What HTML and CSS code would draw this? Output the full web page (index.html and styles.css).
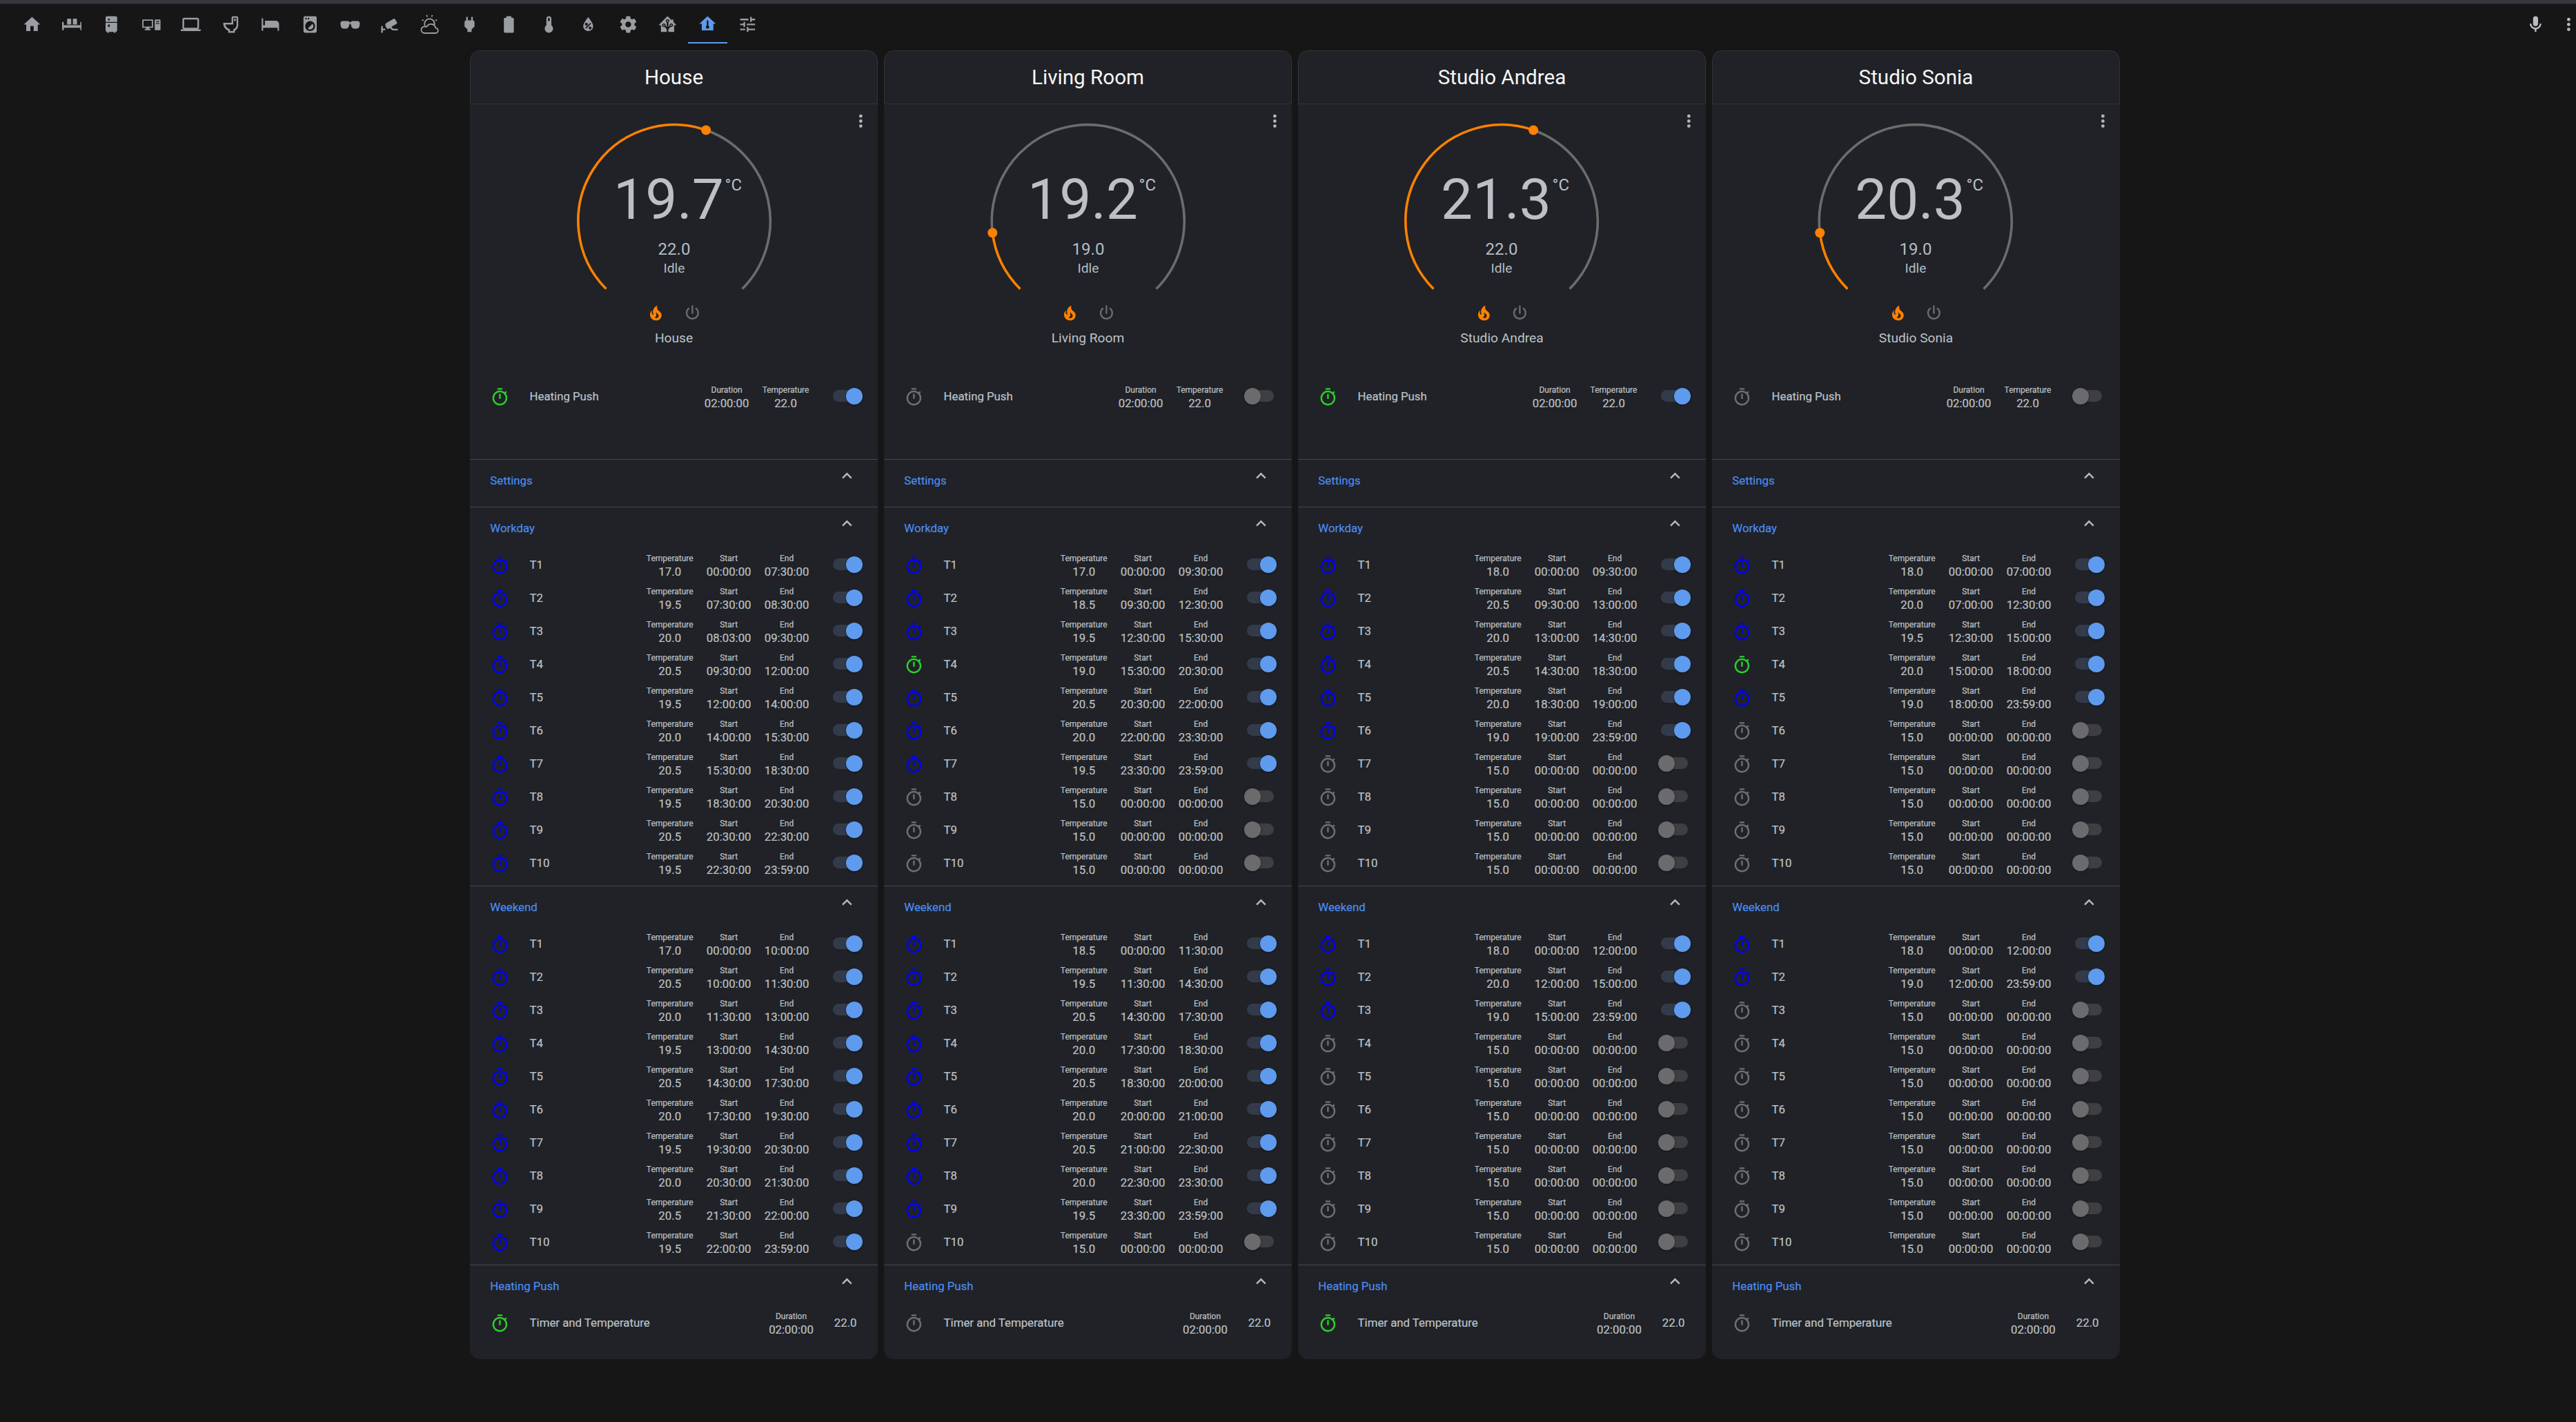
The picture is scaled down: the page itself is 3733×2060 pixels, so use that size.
FILE: index.html
```html
<!DOCTYPE html>
<html lang="en">
<head>
<meta charset="utf-8">
<title>Thermostats</title>
<link rel="stylesheet" href="styles.css">
</head>
<body>
<svg class="defs" aria-hidden="true">
<symbol id="t" viewBox="0 0 24 24"><path d="M12,20A7,7 0 0,1 5,13A7,7 0 0,1 12,6A7,7 0 0,1 19,13A7,7 0 0,1 12,20M19.03,7.39L20.45,5.97C20,5.46 19.55,5 19.04,4.56L17.62,6C16.07,4.74 14.12,4 12,4A9,9 0 0,0 3,13A9,9 0 0,0 12,22C17,22 21,17.97 21,13C21,10.88 20.26,8.93 19.03,7.39M11,14H13V8H11M15,1H9V3H15V1Z"/></symbol>
<symbol id="up" viewBox="0 0 24 24"><path d="M7.41,15.41L12,10.83L16.59,15.41L18,14L12,8L6,14L7.41,15.41Z"/></symbol>
<symbol id="dots" viewBox="0 0 24 24"><path d="M12,16A2,2 0 0,1 14,18A2,2 0 0,1 12,20A2,2 0 0,1 10,18A2,2 0 0,1 12,16M12,10A2,2 0 0,1 14,12A2,2 0 0,1 12,14A2,2 0 0,1 10,12A2,2 0 0,1 12,10M12,4A2,2 0 0,1 14,6A2,2 0 0,1 12,8A2,2 0 0,1 10,6A2,2 0 0,1 12,4Z"/></symbol>
<symbol id="fire" viewBox="0 0 24 24"><path d="M17.66 11.2C17.43 10.9 17.15 10.64 16.89 10.38C16.22 9.78 15.46 9.35 14.82 8.72C13.33 7.26 13 4.85 13.95 3C13 3.23 12.17 3.75 11.46 4.32C8.87 6.4 7.85 10.07 9.07 13.22C9.11 13.32 9.15 13.42 9.15 13.55C9.15 13.77 9 13.97 8.8 14.05C8.57 14.15 8.33 14.09 8.14 13.93C8.08 13.88 8.04 13.83 8 13.76C6.87 12.33 6.69 10.28 7.45 8.64C5.78 10 4.87 12.3 5 14.47C5.06 14.97 5.12 15.47 5.29 15.97C5.43 16.57 5.7 17.17 6 17.7C7.08 19.43 8.95 20.67 10.96 20.92C13.1 21.19 15.39 20.8 17.03 19.32C18.86 17.66 19.5 15 18.56 12.72L18.43 12.46C18.22 12 17.66 11.2 17.66 11.2M14.5 17.5C14.22 17.74 13.76 18 13.4 18.1C12.28 18.5 11.16 17.94 10.5 17.28C11.69 17 12.4 16.12 12.61 15.23C12.78 14.43 12.46 13.77 12.33 13C12.21 12.26 12.23 11.63 12.5 10.94C12.69 11.32 12.89 11.7 13.13 12C13.9 13 15.11 13.44 15.37 14.8C15.41 14.94 15.43 15.08 15.43 15.23C15.46 16.05 15.1 16.95 14.5 17.5H14.5Z"/></symbol>
<symbol id="pw" viewBox="0 0 24 24"><path d="M16.56,5.44L15.11,6.89C16.84,7.94 18,9.83 18,12A6,6 0 0,1 12,18A6,6 0 0,1 6,12C6,9.83 7.16,7.94 8.88,6.88L7.44,5.44C5.36,6.88 4,9.28 4,12A8,8 0 0,0 12,20A8,8 0 0,0 20,12C20,9.28 18.64,6.88 16.56,5.44M13,3H11V13H13"/></symbol>
</svg>
<header class="bar">
<nav class="tabs">
<a class="tab"><svg viewBox="0 0 24 24"><path d="M10,20V14H14V20H19V12H22L12,3L2,12H5V20H10Z"/></svg></a>
<a class="tab"><svg viewBox="0 0 24 24"><path d="M7 5h3a1 1 0 0 1 1 1v6H6V6a1 1 0 0 1 1-1zM14 5h3a1 1 0 0 1 1 1v6h-5V6a1 1 0 0 1 1-1zM0 9h2v4h20V9h2v10h-2v-3H2v3H0z"/></svg></a>
<a class="tab"><svg viewBox="0 0 24 24"><path d="M7,2H17A2,2 0 0,1 19,4V9H5V4A2,2 0 0,1 7,2M19,19A2,2 0 0,1 17,21V22H15V21H9V22H7V21A2,2 0 0,1 5,19V10H19V19M8,5V7H10V5H8M8,12V15H10V12H8Z"/></svg></a>
<a class="tab"><svg viewBox="0 0 24 24"><path fill-rule="evenodd" d="M1 6h13v10H9.5v1.5H11V19H4v-1.500h1.500V16H1zM2.500 7.500v7h10v-7zM17 6h5a1 1 0 0 1 1 1v11a1 1 0 0 1-1 1h-5a1 1 0 0 1-1-1V7a1 1 0 0 1 1-1zM17.500 8v1h4V8zM17.500 10.500v1h4v-1z"/></svg></a>
<a class="tab"><svg viewBox="0 0 24 24"><path d="M4,6H20V16H4M20,18A2,2 0 0,0 22,16V6C22,4.89 21.1,4 20,4H4C2.89,4 2,4.89 2,6V16A2,2 0 0,0 4,18H0V20H24V18H20Z"/></svg></a>
<a class="tab"><svg viewBox="0 0 24 24"><path fill-rule="evenodd" d="M15 2h4a2 2 0 0 1 2 2v9c0 3-1.600 5.200-4 6.500V22H9v-2.500C5.500 18 3 15 3 11V10h10V4a2 2 0 0 1 2-2zM15 4v8H5.300C5.900 14.600 8 16.600 11 18v2h4v-2c2.500-1 4-2.800 4-5V4zM16 5h2v3h-2z"/></svg></a>
<a class="tab"><svg viewBox="0 0 24 24"><path d="M1 4.500h1.800V13H5V7.500h13a4 4 0 0 1 4 4v8h-1.800V16H2.800v3.500H1z"/></svg></a>
<a class="tab"><svg viewBox="0 0 24 24"><path d="M14.83,11.17C16.39,12.73 16.39,15.27 14.83,16.83C13.27,18.39 10.73,18.39 9.17,16.83L14.83,11.17M6,2H18A2,2 0 0,1 20,4V20A2,2 0 0,1 18,22H6A2,2 0 0,1 4,20V4A2,2 0 0,1 6,2M7,4A1,1 0 0,0 6,5A1,1 0 0,0 7,6A1,1 0 0,0 8,5A1,1 0 0,0 7,4M10,4A1,1 0 0,0 9,5A1,1 0 0,0 10,6A1,1 0 0,0 11,5A1,1 0 0,0 10,4M12,8A6,6 0 0,0 6,14A6,6 0 0,0 12,20A6,6 0 0,0 18,14A6,6 0 0,0 12,8Z"/></svg></a>
<a class="tab"><svg viewBox="0 0 24 24"><path d="M7,17H4C2.38,17 0.96,15.74 0.76,14.14L0.26,11.15C0.15,10.3 0.39,9.5 0.91,8.92C1.43,8.34 2.19,8 3,8H9C9.83,8 10.58,8.35 11.06,8.96C11.17,9.11 11.27,9.27 11.35,9.45C11.78,9.36 12.22,9.36 12.64,9.45C12.72,9.27 12.82,9.11 12.94,8.96C13.41,8.35 14.16,8 15,8H21C21.81,8 22.57,8.34 23.09,8.92C23.6,9.5 23.84,10.3 23.74,11.11L23.23,14.18C23.04,15.74 21.61,17 20,17H17C15.44,17 13.92,15.81 13.54,14.3L12.64,11.3C12.26,11.12 11.73,11.12 11.35,11.3L10.43,14.3C10.07,15.81 8.56,17 7,17Z"/></svg></a>
<a class="tab"><svg viewBox="0 0 24 24"><path d="M18.15,4.94C17.77,4.91 17.37,5 17,5.2L8.35,10.2C7,10.97 6.54,12.69 7.32,14.04L8.82,16.64C9.25,17.38 10.2,17.64 10.94,17.21L12.23,16.46C12.5,16.32 12.84,16.4 13,16.67C13.92,18.26 15.62,19.25 17.45,19.25H22V17.25H17.45C16.34,17.25 15.32,16.66 14.76,15.7C14.5,15.27 14.72,14.71 15.15,14.46L20.43,11.41C21.11,11.02 21.34,10.15 20.95,9.47L19,6.1C18.79,5.73 18.5,5.03 18.15,4.94M2,14V22H4V19H7V17H4V14H2Z"/></svg></a>
<a class="tab"><svg viewBox="0 0 24 24" class="line"><path d="M6 22.500h13a3.200 3.200 0 0 0 .3-6.400a5.500 5.500 0 0 0-10.300-1.500H6a3.950 3.950 0 0 0 0 7.900zM6.500 13.500A6 6 0 1 1 17.800 13M8.500 .8l1 2M15.500 .8l-1 2M3 6.500l2 .8M21 6.500l-2 .8"/></svg></a>
<a class="tab"><svg viewBox="0 0 24 24"><path d="M16 7V3H14V7H10V3H8V7C7 7 6 8 6 9V14.500L9.500 18V21H14.500V18L18 14.500V9C18 8 17 7 16 7Z"/></svg></a>
<a class="tab"><svg viewBox="0 0 24 24"><path d="M16.67,4H15V2H9V4H7.33A1.33,1.33 0 0,0 6,5.33V20.67C6,21.4 6.6,22 7.33,22H16.67A1.33,1.33 0 0,0 18,20.67V5.33C18,4.6 17.4,4 16.67,4Z"/></svg></a>
<a class="tab"><svg viewBox="0 0 24 24"><path d="M15 13V5A3 3 0 0 0 9 5V13A5 5 0 1 0 15 13M12 4A1 1 0 0 1 13 5V8H11V5A1 1 0 0 1 12 4Z"/></svg></a>
<a class="tab"><svg viewBox="0 0 24 24"><path d="M12,3.25C12,3.25 6,10 6,14C6,17.32 8.69,20 12,20A6,6 0 0,0 18,14C18,10 12,3.25 12,3.25M14.47,9.97L15.53,11.03L9.53,17.03L8.47,15.97M9.75,10A1.75,1.75 0 0,1 11.5,11.75A1.75,1.75 0 0,1 9.75,13.5A1.75,1.75 0 0,1 8,11.75A1.75,1.75 0 0,1 9.75,10M14.25,14.5A1.75,1.75 0 0,1 16,16.25A1.75,1.75 0 0,1 14.25,18A1.75,1.75 0 0,1 12.5,16.25A1.75,1.75 0 0,1 14.25,14.5Z"/></svg></a>
<a class="tab"><svg viewBox="0 0 24 24"><path d="M12,15.5A3.5,3.5 0 0,1 8.5,12A3.5,3.5 0 0,1 12,8.5A3.5,3.5 0 0,1 15.5,12A3.5,3.5 0 0,1 12,15.5M19.43,12.97C19.47,12.65 19.5,12.33 19.5,12C19.5,11.67 19.47,11.34 19.43,11L21.54,9.37C21.73,9.22 21.78,8.95 21.66,8.73L19.66,5.27C19.54,5.05 19.27,4.96 19.05,5.05L16.56,6.05C16.04,5.66 15.5,5.32 14.87,5.07L14.5,2.42C14.46,2.18 14.25,2 14,2H10C9.75,2 9.54,2.18 9.5,2.42L9.13,5.07C8.5,5.32 7.96,5.66 7.44,6.05L4.95,5.05C4.73,4.96 4.46,5.05 4.34,5.27L2.34,8.73C2.21,8.95 2.27,9.22 2.46,9.37L4.57,11C4.53,11.34 4.5,11.67 4.5,12C4.5,12.33 4.53,12.65 4.57,12.97L2.46,14.63C2.27,14.78 2.21,15.05 2.34,15.27L4.34,18.73C4.46,18.95 4.73,19.03 4.95,18.95L7.44,17.94C7.96,18.34 8.5,18.68 9.13,18.93L9.5,21.58C9.54,21.82 9.75,22 10,22H14C14.25,22 14.46,21.82 14.5,21.58L14.87,18.93C15.5,18.67 16.04,18.34 16.56,17.94L19.05,18.95C19.27,19.03 19.54,18.95 19.66,18.73L21.66,15.27C21.78,15.05 21.73,14.78 21.54,14.63L19.43,12.97Z"/></svg></a>
<a class="tab"><svg viewBox="0 0 24 24"><path d="M21.8,13H20V21H13V17.67L15.79,14.88L16.5,15C17.66,15 18.6,14.06 18.6,12.9C18.6,11.74 17.66,10.8 16.5,10.8A2.1,2.1 0 0,0 14.4,12.9L14.5,13.61L13,15.13V9.65C13.66,9.29 14.1,8.6 14.1,7.8A2.1,2.1 0 0,0 12,5.7A2.1,2.1 0 0,0 9.9,7.8C9.9,8.6 10.34,9.29 11,9.65V15.13L9.5,13.61L9.6,12.9A2.1,2.1 0 0,0 7.5,10.8A2.1,2.1 0 0,0 5.4,12.9A2.1,2.1 0 0,0 7.5,15L8.21,14.88L11,17.67V21H4V13H2.25C1.83,13 1.42,13 1.42,12.79C1.43,12.57 1.85,12.15 2.28,11.72L11,3C11.33,2.67 11.67,2.33 12,2.33C12.33,2.33 12.67,2.67 13,3L17,7V6H19V9L21.78,11.78C22.15,12.15 22.54,12.54 22.56,12.76C22.57,13 22.18,13 21.8,13M7.5,12A0.9,0.9 0 0,1 8.4,12.9A0.9,0.9 0 0,1 7.5,13.8A0.9,0.9 0 0,1 6.6,12.9A0.9,0.9 0 0,1 7.5,12M16.5,12C17,12 17.4,12.4 17.4,12.9C17.4,13.4 17,13.8 16.5,13.8A0.9,0.9 0 0,1 15.6,12.9A0.9,0.9 0 0,1 16.5,12M12,6.9C12.5,6.9 12.9,7.3 12.9,7.8C12.9,8.3 12.5,8.7 12,8.7C11.5,8.7 11.1,8.3 11.1,7.8C11.1,7.3 11.5,6.9 12,6.9Z"/></svg></a>
<a class="tab active"><svg viewBox="0 0 24 24"><path fill-rule="evenodd" d="M12 3L2 12H5V20H19V12H22L12 3M13 14.300C13.600 14.600 14 15.300 14 16C14 17.100 13.100 18 12 18S10 17.100 10 16C10 15.300 10.400 14.600 11 14.300V9C11 8.400 11.400 8 12 8S13 8.400 13 9V14.300Z"/></svg></a>
<a class="tab"><svg viewBox="0 0 24 24"><path d="M3,17V19H9V17H3M3,5V7H13V5H3M13,21V19H21V17H13V15H11V21H13M7,9V11H3V13H7V15H9V9H7M21,13V11H11V13H21M15,9H17V7H21V5H17V3H15V9Z"/></svg></a>
</nav>
<div class="actions">
<svg viewBox="0 0 24 24"><path d="M12,2A3,3 0 0,1 15,5V11A3,3 0 0,1 12,14A3,3 0 0,1 9,11V5A3,3 0 0,1 12,2M19,11C19,14.53 16.39,17.44 13,17.93V21H11V17.93C7.61,17.44 5,14.53 5,11H7A5,5 0 0,0 12,16A5,5 0 0,0 17,11H19Z"/></svg>
<svg><use href="#dots"/></svg>
</div>
</header>
<main class="board">

<section class="card">
<h2 class="title">House</h2>
<div class="climate">
<svg class="menu"><use href="#dots"/></svg>
<svg class="dial" viewBox="0 0 290 260"><path class="trk" d="M191.100 18.500A139.500 139.500 0 0 1 243.600 248.600"/><path class="hot" d="M46.400 248.600A139.500 139.500 0 0 1 191.100 18.500"/><circle class="pt" cx="191.100" cy="18.500" r="7"/><text class="cur" x="137" y="147.400">19.7</text><text class="unit" x="218.500" y="105.500">°C</text><text class="set" x="145" y="198.500">22.0</text><text class="st" x="145" y="224.500">Idle</text></svg>
<div class="modes"><svg class="hotc"><use href="#fire"/></svg><svg class="offc"><use href="#pw"/></svg></div>
<div class="lbl">House</div>
<div class="row"><svg class="ic g"><use href="#t"/></svg><span class="nm">Heating Push</span><div class="a"><small>Duration</small>02:00:00</div><div class="a"><small>Temperature</small>22.0</div><i class="tg on"></i></div>
</div>
<div class="sec"><div class="hd"><span>Settings</span><svg><use href="#up"/></svg></div></div>
<div class="sec"><div class="hd"><span>Workday</span><svg><use href="#up"/></svg></div>
<div class="row"><svg class="ic b"><use href="#t"/></svg><span class="nm">T1</span><div class="a"><small>Temperature</small>17.0</div><div class="a"><small>Start</small>00:00:00</div><div class="a"><small>End</small>07:30:00</div><i class="tg on"></i></div>
<div class="row"><svg class="ic b"><use href="#t"/></svg><span class="nm">T2</span><div class="a"><small>Temperature</small>19.5</div><div class="a"><small>Start</small>07:30:00</div><div class="a"><small>End</small>08:30:00</div><i class="tg on"></i></div>
<div class="row"><svg class="ic b"><use href="#t"/></svg><span class="nm">T3</span><div class="a"><small>Temperature</small>20.0</div><div class="a"><small>Start</small>08:03:00</div><div class="a"><small>End</small>09:30:00</div><i class="tg on"></i></div>
<div class="row"><svg class="ic b"><use href="#t"/></svg><span class="nm">T4</span><div class="a"><small>Temperature</small>20.5</div><div class="a"><small>Start</small>09:30:00</div><div class="a"><small>End</small>12:00:00</div><i class="tg on"></i></div>
<div class="row"><svg class="ic b"><use href="#t"/></svg><span class="nm">T5</span><div class="a"><small>Temperature</small>19.5</div><div class="a"><small>Start</small>12:00:00</div><div class="a"><small>End</small>14:00:00</div><i class="tg on"></i></div>
<div class="row"><svg class="ic b"><use href="#t"/></svg><span class="nm">T6</span><div class="a"><small>Temperature</small>20.0</div><div class="a"><small>Start</small>14:00:00</div><div class="a"><small>End</small>15:30:00</div><i class="tg on"></i></div>
<div class="row"><svg class="ic b"><use href="#t"/></svg><span class="nm">T7</span><div class="a"><small>Temperature</small>20.5</div><div class="a"><small>Start</small>15:30:00</div><div class="a"><small>End</small>18:30:00</div><i class="tg on"></i></div>
<div class="row"><svg class="ic b"><use href="#t"/></svg><span class="nm">T8</span><div class="a"><small>Temperature</small>19.5</div><div class="a"><small>Start</small>18:30:00</div><div class="a"><small>End</small>20:30:00</div><i class="tg on"></i></div>
<div class="row"><svg class="ic b"><use href="#t"/></svg><span class="nm">T9</span><div class="a"><small>Temperature</small>20.5</div><div class="a"><small>Start</small>20:30:00</div><div class="a"><small>End</small>22:30:00</div><i class="tg on"></i></div>
<div class="row"><svg class="ic b"><use href="#t"/></svg><span class="nm">T10</span><div class="a"><small>Temperature</small>19.5</div><div class="a"><small>Start</small>22:30:00</div><div class="a"><small>End</small>23:59:00</div><i class="tg on"></i></div>
</div>
<div class="sec"><div class="hd"><span>Weekend</span><svg><use href="#up"/></svg></div>
<div class="row"><svg class="ic b"><use href="#t"/></svg><span class="nm">T1</span><div class="a"><small>Temperature</small>17.0</div><div class="a"><small>Start</small>00:00:00</div><div class="a"><small>End</small>10:00:00</div><i class="tg on"></i></div>
<div class="row"><svg class="ic b"><use href="#t"/></svg><span class="nm">T2</span><div class="a"><small>Temperature</small>20.5</div><div class="a"><small>Start</small>10:00:00</div><div class="a"><small>End</small>11:30:00</div><i class="tg on"></i></div>
<div class="row"><svg class="ic b"><use href="#t"/></svg><span class="nm">T3</span><div class="a"><small>Temperature</small>20.0</div><div class="a"><small>Start</small>11:30:00</div><div class="a"><small>End</small>13:00:00</div><i class="tg on"></i></div>
<div class="row"><svg class="ic b"><use href="#t"/></svg><span class="nm">T4</span><div class="a"><small>Temperature</small>19.5</div><div class="a"><small>Start</small>13:00:00</div><div class="a"><small>End</small>14:30:00</div><i class="tg on"></i></div>
<div class="row"><svg class="ic b"><use href="#t"/></svg><span class="nm">T5</span><div class="a"><small>Temperature</small>20.5</div><div class="a"><small>Start</small>14:30:00</div><div class="a"><small>End</small>17:30:00</div><i class="tg on"></i></div>
<div class="row"><svg class="ic b"><use href="#t"/></svg><span class="nm">T6</span><div class="a"><small>Temperature</small>20.0</div><div class="a"><small>Start</small>17:30:00</div><div class="a"><small>End</small>19:30:00</div><i class="tg on"></i></div>
<div class="row"><svg class="ic b"><use href="#t"/></svg><span class="nm">T7</span><div class="a"><small>Temperature</small>19.5</div><div class="a"><small>Start</small>19:30:00</div><div class="a"><small>End</small>20:30:00</div><i class="tg on"></i></div>
<div class="row"><svg class="ic b"><use href="#t"/></svg><span class="nm">T8</span><div class="a"><small>Temperature</small>20.0</div><div class="a"><small>Start</small>20:30:00</div><div class="a"><small>End</small>21:30:00</div><i class="tg on"></i></div>
<div class="row"><svg class="ic b"><use href="#t"/></svg><span class="nm">T9</span><div class="a"><small>Temperature</small>20.5</div><div class="a"><small>Start</small>21:30:00</div><div class="a"><small>End</small>22:00:00</div><i class="tg on"></i></div>
<div class="row"><svg class="ic b"><use href="#t"/></svg><span class="nm">T10</span><div class="a"><small>Temperature</small>19.5</div><div class="a"><small>Start</small>22:00:00</div><div class="a"><small>End</small>23:59:00</div><i class="tg on"></i></div>
</div>
<div class="sec last"><div class="hd"><span>Heating Push</span><svg><use href="#up"/></svg></div>
<div class="row end"><svg class="ic g"><use href="#t"/></svg><span class="nm">Timer and Temperature</span><div class="a"><small>Duration</small>02:00:00</div><span class="v">22.0</span></div>
</div>
</section>

<section class="card">
<h2 class="title">Living Room</h2>
<div class="climate">
<svg class="menu"><use href="#dots"/></svg>
<svg class="dial" viewBox="0 0 290 260"><path class="trk" d="M6.300 167.300A139.500 139.500 0 1 1 243.600 248.600"/><path class="hot" d="M46.400 248.600A139.500 139.500 0 0 1 6.300 167.300"/><circle class="pt" cx="6.300" cy="167.300" r="7"/><text class="cur" x="137" y="147.400">19.2</text><text class="unit" x="218.500" y="105.500">°C</text><text class="set" x="145" y="198.500">19.0</text><text class="st" x="145" y="224.500">Idle</text></svg>
<div class="modes"><svg class="hotc"><use href="#fire"/></svg><svg class="offc"><use href="#pw"/></svg></div>
<div class="lbl">Living Room</div>
<div class="row"><svg class="ic o"><use href="#t"/></svg><span class="nm">Heating Push</span><div class="a"><small>Duration</small>02:00:00</div><div class="a"><small>Temperature</small>22.0</div><i class="tg"></i></div>
</div>
<div class="sec"><div class="hd"><span>Settings</span><svg><use href="#up"/></svg></div></div>
<div class="sec"><div class="hd"><span>Workday</span><svg><use href="#up"/></svg></div>
<div class="row"><svg class="ic b"><use href="#t"/></svg><span class="nm">T1</span><div class="a"><small>Temperature</small>17.0</div><div class="a"><small>Start</small>00:00:00</div><div class="a"><small>End</small>09:30:00</div><i class="tg on"></i></div>
<div class="row"><svg class="ic b"><use href="#t"/></svg><span class="nm">T2</span><div class="a"><small>Temperature</small>18.5</div><div class="a"><small>Start</small>09:30:00</div><div class="a"><small>End</small>12:30:00</div><i class="tg on"></i></div>
<div class="row"><svg class="ic b"><use href="#t"/></svg><span class="nm">T3</span><div class="a"><small>Temperature</small>19.5</div><div class="a"><small>Start</small>12:30:00</div><div class="a"><small>End</small>15:30:00</div><i class="tg on"></i></div>
<div class="row"><svg class="ic g"><use href="#t"/></svg><span class="nm">T4</span><div class="a"><small>Temperature</small>19.0</div><div class="a"><small>Start</small>15:30:00</div><div class="a"><small>End</small>20:30:00</div><i class="tg on"></i></div>
<div class="row"><svg class="ic b"><use href="#t"/></svg><span class="nm">T5</span><div class="a"><small>Temperature</small>20.5</div><div class="a"><small>Start</small>20:30:00</div><div class="a"><small>End</small>22:00:00</div><i class="tg on"></i></div>
<div class="row"><svg class="ic b"><use href="#t"/></svg><span class="nm">T6</span><div class="a"><small>Temperature</small>20.0</div><div class="a"><small>Start</small>22:00:00</div><div class="a"><small>End</small>23:30:00</div><i class="tg on"></i></div>
<div class="row"><svg class="ic b"><use href="#t"/></svg><span class="nm">T7</span><div class="a"><small>Temperature</small>19.5</div><div class="a"><small>Start</small>23:30:00</div><div class="a"><small>End</small>23:59:00</div><i class="tg on"></i></div>
<div class="row"><svg class="ic o"><use href="#t"/></svg><span class="nm">T8</span><div class="a"><small>Temperature</small>15.0</div><div class="a"><small>Start</small>00:00:00</div><div class="a"><small>End</small>00:00:00</div><i class="tg"></i></div>
<div class="row"><svg class="ic o"><use href="#t"/></svg><span class="nm">T9</span><div class="a"><small>Temperature</small>15.0</div><div class="a"><small>Start</small>00:00:00</div><div class="a"><small>End</small>00:00:00</div><i class="tg"></i></div>
<div class="row"><svg class="ic o"><use href="#t"/></svg><span class="nm">T10</span><div class="a"><small>Temperature</small>15.0</div><div class="a"><small>Start</small>00:00:00</div><div class="a"><small>End</small>00:00:00</div><i class="tg"></i></div>
</div>
<div class="sec"><div class="hd"><span>Weekend</span><svg><use href="#up"/></svg></div>
<div class="row"><svg class="ic b"><use href="#t"/></svg><span class="nm">T1</span><div class="a"><small>Temperature</small>18.5</div><div class="a"><small>Start</small>00:00:00</div><div class="a"><small>End</small>11:30:00</div><i class="tg on"></i></div>
<div class="row"><svg class="ic b"><use href="#t"/></svg><span class="nm">T2</span><div class="a"><small>Temperature</small>19.5</div><div class="a"><small>Start</small>11:30:00</div><div class="a"><small>End</small>14:30:00</div><i class="tg on"></i></div>
<div class="row"><svg class="ic b"><use href="#t"/></svg><span class="nm">T3</span><div class="a"><small>Temperature</small>20.5</div><div class="a"><small>Start</small>14:30:00</div><div class="a"><small>End</small>17:30:00</div><i class="tg on"></i></div>
<div class="row"><svg class="ic b"><use href="#t"/></svg><span class="nm">T4</span><div class="a"><small>Temperature</small>20.0</div><div class="a"><small>Start</small>17:30:00</div><div class="a"><small>End</small>18:30:00</div><i class="tg on"></i></div>
<div class="row"><svg class="ic b"><use href="#t"/></svg><span class="nm">T5</span><div class="a"><small>Temperature</small>20.5</div><div class="a"><small>Start</small>18:30:00</div><div class="a"><small>End</small>20:00:00</div><i class="tg on"></i></div>
<div class="row"><svg class="ic b"><use href="#t"/></svg><span class="nm">T6</span><div class="a"><small>Temperature</small>20.0</div><div class="a"><small>Start</small>20:00:00</div><div class="a"><small>End</small>21:00:00</div><i class="tg on"></i></div>
<div class="row"><svg class="ic b"><use href="#t"/></svg><span class="nm">T7</span><div class="a"><small>Temperature</small>20.5</div><div class="a"><small>Start</small>21:00:00</div><div class="a"><small>End</small>22:30:00</div><i class="tg on"></i></div>
<div class="row"><svg class="ic b"><use href="#t"/></svg><span class="nm">T8</span><div class="a"><small>Temperature</small>20.0</div><div class="a"><small>Start</small>22:30:00</div><div class="a"><small>End</small>23:30:00</div><i class="tg on"></i></div>
<div class="row"><svg class="ic b"><use href="#t"/></svg><span class="nm">T9</span><div class="a"><small>Temperature</small>19.5</div><div class="a"><small>Start</small>23:30:00</div><div class="a"><small>End</small>23:59:00</div><i class="tg on"></i></div>
<div class="row"><svg class="ic o"><use href="#t"/></svg><span class="nm">T10</span><div class="a"><small>Temperature</small>15.0</div><div class="a"><small>Start</small>00:00:00</div><div class="a"><small>End</small>00:00:00</div><i class="tg"></i></div>
</div>
<div class="sec last"><div class="hd"><span>Heating Push</span><svg><use href="#up"/></svg></div>
<div class="row end"><svg class="ic o"><use href="#t"/></svg><span class="nm">Timer and Temperature</span><div class="a"><small>Duration</small>02:00:00</div><span class="v">22.0</span></div>
</div>
</section>

<section class="card">
<h2 class="title">Studio Andrea</h2>
<div class="climate">
<svg class="menu"><use href="#dots"/></svg>
<svg class="dial" viewBox="0 0 290 260"><path class="trk" d="M191.100 18.500A139.500 139.500 0 0 1 243.600 248.600"/><path class="hot" d="M46.400 248.600A139.500 139.500 0 0 1 191.100 18.500"/><circle class="pt" cx="191.100" cy="18.500" r="7"/><text class="cur" x="137" y="147.400">21.3</text><text class="unit" x="218.500" y="105.500">°C</text><text class="set" x="145" y="198.500">22.0</text><text class="st" x="145" y="224.500">Idle</text></svg>
<div class="modes"><svg class="hotc"><use href="#fire"/></svg><svg class="offc"><use href="#pw"/></svg></div>
<div class="lbl">Studio Andrea</div>
<div class="row"><svg class="ic g"><use href="#t"/></svg><span class="nm">Heating Push</span><div class="a"><small>Duration</small>02:00:00</div><div class="a"><small>Temperature</small>22.0</div><i class="tg on"></i></div>
</div>
<div class="sec"><div class="hd"><span>Settings</span><svg><use href="#up"/></svg></div></div>
<div class="sec"><div class="hd"><span>Workday</span><svg><use href="#up"/></svg></div>
<div class="row"><svg class="ic b"><use href="#t"/></svg><span class="nm">T1</span><div class="a"><small>Temperature</small>18.0</div><div class="a"><small>Start</small>00:00:00</div><div class="a"><small>End</small>09:30:00</div><i class="tg on"></i></div>
<div class="row"><svg class="ic b"><use href="#t"/></svg><span class="nm">T2</span><div class="a"><small>Temperature</small>20.5</div><div class="a"><small>Start</small>09:30:00</div><div class="a"><small>End</small>13:00:00</div><i class="tg on"></i></div>
<div class="row"><svg class="ic b"><use href="#t"/></svg><span class="nm">T3</span><div class="a"><small>Temperature</small>20.0</div><div class="a"><small>Start</small>13:00:00</div><div class="a"><small>End</small>14:30:00</div><i class="tg on"></i></div>
<div class="row"><svg class="ic b"><use href="#t"/></svg><span class="nm">T4</span><div class="a"><small>Temperature</small>20.5</div><div class="a"><small>Start</small>14:30:00</div><div class="a"><small>End</small>18:30:00</div><i class="tg on"></i></div>
<div class="row"><svg class="ic b"><use href="#t"/></svg><span class="nm">T5</span><div class="a"><small>Temperature</small>20.0</div><div class="a"><small>Start</small>18:30:00</div><div class="a"><small>End</small>19:00:00</div><i class="tg on"></i></div>
<div class="row"><svg class="ic b"><use href="#t"/></svg><span class="nm">T6</span><div class="a"><small>Temperature</small>19.0</div><div class="a"><small>Start</small>19:00:00</div><div class="a"><small>End</small>23:59:00</div><i class="tg on"></i></div>
<div class="row"><svg class="ic o"><use href="#t"/></svg><span class="nm">T7</span><div class="a"><small>Temperature</small>15.0</div><div class="a"><small>Start</small>00:00:00</div><div class="a"><small>End</small>00:00:00</div><i class="tg"></i></div>
<div class="row"><svg class="ic o"><use href="#t"/></svg><span class="nm">T8</span><div class="a"><small>Temperature</small>15.0</div><div class="a"><small>Start</small>00:00:00</div><div class="a"><small>End</small>00:00:00</div><i class="tg"></i></div>
<div class="row"><svg class="ic o"><use href="#t"/></svg><span class="nm">T9</span><div class="a"><small>Temperature</small>15.0</div><div class="a"><small>Start</small>00:00:00</div><div class="a"><small>End</small>00:00:00</div><i class="tg"></i></div>
<div class="row"><svg class="ic o"><use href="#t"/></svg><span class="nm">T10</span><div class="a"><small>Temperature</small>15.0</div><div class="a"><small>Start</small>00:00:00</div><div class="a"><small>End</small>00:00:00</div><i class="tg"></i></div>
</div>
<div class="sec"><div class="hd"><span>Weekend</span><svg><use href="#up"/></svg></div>
<div class="row"><svg class="ic b"><use href="#t"/></svg><span class="nm">T1</span><div class="a"><small>Temperature</small>18.0</div><div class="a"><small>Start</small>00:00:00</div><div class="a"><small>End</small>12:00:00</div><i class="tg on"></i></div>
<div class="row"><svg class="ic b"><use href="#t"/></svg><span class="nm">T2</span><div class="a"><small>Temperature</small>20.0</div><div class="a"><small>Start</small>12:00:00</div><div class="a"><small>End</small>15:00:00</div><i class="tg on"></i></div>
<div class="row"><svg class="ic b"><use href="#t"/></svg><span class="nm">T3</span><div class="a"><small>Temperature</small>19.0</div><div class="a"><small>Start</small>15:00:00</div><div class="a"><small>End</small>23:59:00</div><i class="tg on"></i></div>
<div class="row"><svg class="ic o"><use href="#t"/></svg><span class="nm">T4</span><div class="a"><small>Temperature</small>15.0</div><div class="a"><small>Start</small>00:00:00</div><div class="a"><small>End</small>00:00:00</div><i class="tg"></i></div>
<div class="row"><svg class="ic o"><use href="#t"/></svg><span class="nm">T5</span><div class="a"><small>Temperature</small>15.0</div><div class="a"><small>Start</small>00:00:00</div><div class="a"><small>End</small>00:00:00</div><i class="tg"></i></div>
<div class="row"><svg class="ic o"><use href="#t"/></svg><span class="nm">T6</span><div class="a"><small>Temperature</small>15.0</div><div class="a"><small>Start</small>00:00:00</div><div class="a"><small>End</small>00:00:00</div><i class="tg"></i></div>
<div class="row"><svg class="ic o"><use href="#t"/></svg><span class="nm">T7</span><div class="a"><small>Temperature</small>15.0</div><div class="a"><small>Start</small>00:00:00</div><div class="a"><small>End</small>00:00:00</div><i class="tg"></i></div>
<div class="row"><svg class="ic o"><use href="#t"/></svg><span class="nm">T8</span><div class="a"><small>Temperature</small>15.0</div><div class="a"><small>Start</small>00:00:00</div><div class="a"><small>End</small>00:00:00</div><i class="tg"></i></div>
<div class="row"><svg class="ic o"><use href="#t"/></svg><span class="nm">T9</span><div class="a"><small>Temperature</small>15.0</div><div class="a"><small>Start</small>00:00:00</div><div class="a"><small>End</small>00:00:00</div><i class="tg"></i></div>
<div class="row"><svg class="ic o"><use href="#t"/></svg><span class="nm">T10</span><div class="a"><small>Temperature</small>15.0</div><div class="a"><small>Start</small>00:00:00</div><div class="a"><small>End</small>00:00:00</div><i class="tg"></i></div>
</div>
<div class="sec last"><div class="hd"><span>Heating Push</span><svg><use href="#up"/></svg></div>
<div class="row end"><svg class="ic g"><use href="#t"/></svg><span class="nm">Timer and Temperature</span><div class="a"><small>Duration</small>02:00:00</div><span class="v">22.0</span></div>
</div>
</section>

<section class="card">
<h2 class="title">Studio Sonia</h2>
<div class="climate">
<svg class="menu"><use href="#dots"/></svg>
<svg class="dial" viewBox="0 0 290 260"><path class="trk" d="M6.300 167.300A139.500 139.500 0 1 1 243.600 248.600"/><path class="hot" d="M46.400 248.600A139.500 139.500 0 0 1 6.300 167.300"/><circle class="pt" cx="6.300" cy="167.300" r="7"/><text class="cur" x="137" y="147.400">20.3</text><text class="unit" x="218.500" y="105.500">°C</text><text class="set" x="145" y="198.500">19.0</text><text class="st" x="145" y="224.500">Idle</text></svg>
<div class="modes"><svg class="hotc"><use href="#fire"/></svg><svg class="offc"><use href="#pw"/></svg></div>
<div class="lbl">Studio Sonia</div>
<div class="row"><svg class="ic o"><use href="#t"/></svg><span class="nm">Heating Push</span><div class="a"><small>Duration</small>02:00:00</div><div class="a"><small>Temperature</small>22.0</div><i class="tg"></i></div>
</div>
<div class="sec"><div class="hd"><span>Settings</span><svg><use href="#up"/></svg></div></div>
<div class="sec"><div class="hd"><span>Workday</span><svg><use href="#up"/></svg></div>
<div class="row"><svg class="ic b"><use href="#t"/></svg><span class="nm">T1</span><div class="a"><small>Temperature</small>18.0</div><div class="a"><small>Start</small>00:00:00</div><div class="a"><small>End</small>07:00:00</div><i class="tg on"></i></div>
<div class="row"><svg class="ic b"><use href="#t"/></svg><span class="nm">T2</span><div class="a"><small>Temperature</small>20.0</div><div class="a"><small>Start</small>07:00:00</div><div class="a"><small>End</small>12:30:00</div><i class="tg on"></i></div>
<div class="row"><svg class="ic b"><use href="#t"/></svg><span class="nm">T3</span><div class="a"><small>Temperature</small>19.5</div><div class="a"><small>Start</small>12:30:00</div><div class="a"><small>End</small>15:00:00</div><i class="tg on"></i></div>
<div class="row"><svg class="ic g"><use href="#t"/></svg><span class="nm">T4</span><div class="a"><small>Temperature</small>20.0</div><div class="a"><small>Start</small>15:00:00</div><div class="a"><small>End</small>18:00:00</div><i class="tg on"></i></div>
<div class="row"><svg class="ic b"><use href="#t"/></svg><span class="nm">T5</span><div class="a"><small>Temperature</small>19.0</div><div class="a"><small>Start</small>18:00:00</div><div class="a"><small>End</small>23:59:00</div><i class="tg on"></i></div>
<div class="row"><svg class="ic o"><use href="#t"/></svg><span class="nm">T6</span><div class="a"><small>Temperature</small>15.0</div><div class="a"><small>Start</small>00:00:00</div><div class="a"><small>End</small>00:00:00</div><i class="tg"></i></div>
<div class="row"><svg class="ic o"><use href="#t"/></svg><span class="nm">T7</span><div class="a"><small>Temperature</small>15.0</div><div class="a"><small>Start</small>00:00:00</div><div class="a"><small>End</small>00:00:00</div><i class="tg"></i></div>
<div class="row"><svg class="ic o"><use href="#t"/></svg><span class="nm">T8</span><div class="a"><small>Temperature</small>15.0</div><div class="a"><small>Start</small>00:00:00</div><div class="a"><small>End</small>00:00:00</div><i class="tg"></i></div>
<div class="row"><svg class="ic o"><use href="#t"/></svg><span class="nm">T9</span><div class="a"><small>Temperature</small>15.0</div><div class="a"><small>Start</small>00:00:00</div><div class="a"><small>End</small>00:00:00</div><i class="tg"></i></div>
<div class="row"><svg class="ic o"><use href="#t"/></svg><span class="nm">T10</span><div class="a"><small>Temperature</small>15.0</div><div class="a"><small>Start</small>00:00:00</div><div class="a"><small>End</small>00:00:00</div><i class="tg"></i></div>
</div>
<div class="sec"><div class="hd"><span>Weekend</span><svg><use href="#up"/></svg></div>
<div class="row"><svg class="ic b"><use href="#t"/></svg><span class="nm">T1</span><div class="a"><small>Temperature</small>18.0</div><div class="a"><small>Start</small>00:00:00</div><div class="a"><small>End</small>12:00:00</div><i class="tg on"></i></div>
<div class="row"><svg class="ic b"><use href="#t"/></svg><span class="nm">T2</span><div class="a"><small>Temperature</small>19.0</div><div class="a"><small>Start</small>12:00:00</div><div class="a"><small>End</small>23:59:00</div><i class="tg on"></i></div>
<div class="row"><svg class="ic o"><use href="#t"/></svg><span class="nm">T3</span><div class="a"><small>Temperature</small>15.0</div><div class="a"><small>Start</small>00:00:00</div><div class="a"><small>End</small>00:00:00</div><i class="tg"></i></div>
<div class="row"><svg class="ic o"><use href="#t"/></svg><span class="nm">T4</span><div class="a"><small>Temperature</small>15.0</div><div class="a"><small>Start</small>00:00:00</div><div class="a"><small>End</small>00:00:00</div><i class="tg"></i></div>
<div class="row"><svg class="ic o"><use href="#t"/></svg><span class="nm">T5</span><div class="a"><small>Temperature</small>15.0</div><div class="a"><small>Start</small>00:00:00</div><div class="a"><small>End</small>00:00:00</div><i class="tg"></i></div>
<div class="row"><svg class="ic o"><use href="#t"/></svg><span class="nm">T6</span><div class="a"><small>Temperature</small>15.0</div><div class="a"><small>Start</small>00:00:00</div><div class="a"><small>End</small>00:00:00</div><i class="tg"></i></div>
<div class="row"><svg class="ic o"><use href="#t"/></svg><span class="nm">T7</span><div class="a"><small>Temperature</small>15.0</div><div class="a"><small>Start</small>00:00:00</div><div class="a"><small>End</small>00:00:00</div><i class="tg"></i></div>
<div class="row"><svg class="ic o"><use href="#t"/></svg><span class="nm">T8</span><div class="a"><small>Temperature</small>15.0</div><div class="a"><small>Start</small>00:00:00</div><div class="a"><small>End</small>00:00:00</div><i class="tg"></i></div>
<div class="row"><svg class="ic o"><use href="#t"/></svg><span class="nm">T9</span><div class="a"><small>Temperature</small>15.0</div><div class="a"><small>Start</small>00:00:00</div><div class="a"><small>End</small>00:00:00</div><i class="tg"></i></div>
<div class="row"><svg class="ic o"><use href="#t"/></svg><span class="nm">T10</span><div class="a"><small>Temperature</small>15.0</div><div class="a"><small>Start</small>00:00:00</div><div class="a"><small>End</small>00:00:00</div><i class="tg"></i></div>
</div>
<div class="sec last"><div class="hd"><span>Heating Push</span><svg><use href="#up"/></svg></div>
<div class="row end"><svg class="ic o"><use href="#t"/></svg><span class="nm">Timer and Temperature</span><div class="a"><small>Duration</small>02:00:00</div><span class="v">22.0</span></div>
</div>
</section>

</main>
</body>
</html>
```
FILE: styles.css
```css
* { box-sizing: border-box; }
html, body { margin: 0; height: 100%; }
body {
  background: #161616;
  color: #bcc2c8;
  font-family: Roboto, "Liberation Sans", sans-serif;
  overflow: hidden;
}
svg { fill: currentColor; display: block; }
.defs { width: 0; height: 0; position: absolute; }

.bar {
  display: flex;
  justify-content: space-between;
  height: 68px;
  padding-left: 17.6px;
  border-top: 5px solid #35373c;
  box-shadow: inset 0 1px 0 #232427;
}
.tabs { display: flex; }
.tab {
  position: relative;
  width: 57.6px;
  height: 57.6px;
  padding-top: 2.4px;
  display: flex;
  align-items: center;
  justify-content: center;
  color: #9a9da2;
}
.tab svg { width: 28.8px; height: 28.8px; }
.tab .line { fill: none; stroke: currentColor; stroke-width: 1.5; }
.tab.active { color: #5e9bef; border-bottom: 2px solid #5e9bef; }
.actions {
  display: flex;
  gap: 19.2px;
  height: 57.6px;
  padding-top: 2.4px;
  align-items: center;
  margin-right: -3.4px;
  color: #b9bbc0;
}
.actions svg { width: 28.8px; height: 28.8px; }

.board {
  display: flex;
  justify-content: center;
  align-items: flex-start;
  gap: 9.6px;
  padding: 5.300px 0 0 20px;
}
.card {
  width: 590.4px;
  height: 1895.7px;
  background: #202227;
  border-radius: 14.4px;
  overflow: hidden;
}
.title {
  margin: 0;
  height: 77.700px;
  border: 1px solid #313337;
  border-radius: 14.4px 14.4px 0 0;
  display: flex;
  align-items: center;
  justify-content: center;
  color: #f6f6f6;
  font-size: 29.6px;
  font-weight: 400;
}

.climate { position: relative; height: 514px; padding-top: 19.500px; }
.menu {
  position: absolute;
  top: 9.600px;
  right: 10.300px;
  width: 28.8px;
  height: 28.8px;
  color: #b4b6ba;
}
.dial { width: 290px; height: 260px; margin: 0 auto; overflow: visible; }
.trk, .hot { fill: none; stroke-width: 3.6; }
.trk { stroke: #6c6c6c; }
.hot { stroke: #ff8100; }
.pt { fill: #ff8100; }
.dial text { text-anchor: middle; }
.cur { font-size: 82px; font-weight: 400; fill: #bcbfc4; }
.dial .unit { font-size: 24px; font-weight: 400; fill: #bcbfc4; text-anchor: start; }
.set { font-size: 24px; fill: #b4bcc4; font-weight: 400; }
.st { font-size: 19.2px; fill: #b4bcc4; }
.modes { display: flex; justify-content: center; gap: 24px; margin-top: 8.700px; }
.modes svg { width: 28.8px; height: 28.8px; }
.hotc { color: #ff8100; }
.offc { color: #6c6c6c; }
.lbl {
  margin-top: 10.500px;
  text-align: center;
  font-size: 19.2px;
  line-height: 24px;
  color: #bcc2c8;
}

.row {
  display: flex;
  align-items: center;
  gap: 19.2px;
  height: 48px;
  padding: 0 22px 0 29px;
  font-size: 16.8px;
  -webkit-text-stroke: .2px currentColor;
}
.climate .row { margin-top: 47.500px; }
.ic { width: 28.8px; height: 28.8px; margin: 3px 9.300px 0 0; flex: none; }
.b { color: #0000ff; }
.g { color: #2bd02b; }
.o { color: #6f6f6f; }
.nm { flex: 1; }
.a {
  padding-top: 3px;
  text-align: center;
  line-height: 20.2px;
  color: #bac1c7;
}
.a small {
  display: block;
  font-size: 12px;
  line-height: 17px;
  color: #bec1c4;
}
.end { padding-right: 30.400px; }
.end .v { width: 32.500px; margin-left: 10.800px; color: #bac1c7; }
.tg {
  position: relative;
  flex: none;
  width: 47px;
  height: 24px;
  margin-left: 11.100px;
}
.tg::before {
  content: "";
  position: absolute;
  left: 4.500px;
  top: 3.500px;
  width: 38.500px;
  height: 17px;
  border-radius: 8.500px;
  background: #3e3f43;
}
.tg::after {
  content: "";
  position: absolute;
  left: 0;
  top: 0;
  width: 24px;
  height: 24px;
  border-radius: 50%;
  background: #6b6b6e;
  box-shadow: 0 1px 3px rgba(0, 0, 0, .45);
}
.tg.on::before { background: #333b4b; }
.tg.on::after { left: 23px; background: #5e9bef; }

.sec { border-top: 1px solid #46484c; padding-bottom: 9px; }
.last { padding-bottom: 0; }
.hd {
  display: flex;
  justify-content: space-between;
  align-items: flex-start;
  height: 59px;
  padding: 0 29.600px 0 29px;
  font-size: 16.8px;
  line-height: 60px;
  color: #4b8cf2;
  -webkit-text-stroke: .2px currentColor;
}
.hd svg { width: 28.8px; height: 28.8px; margin-top: 9px; color: #b9b9b9; }
```
